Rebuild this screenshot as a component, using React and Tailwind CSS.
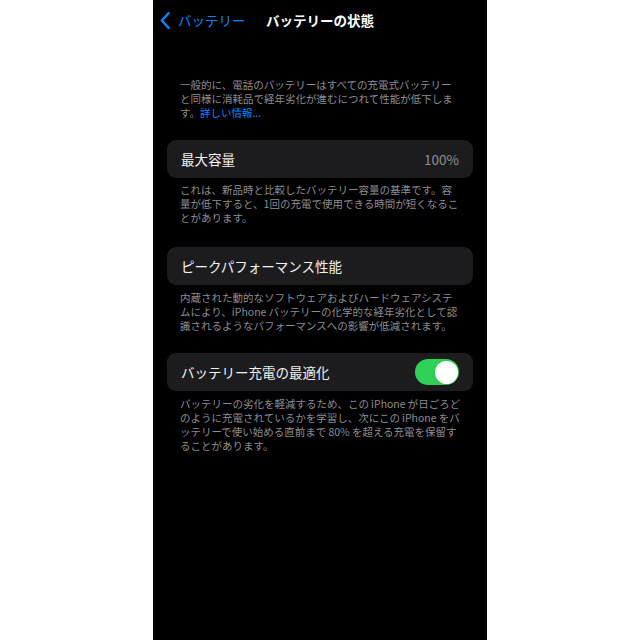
const font = { fontFamily: '"Noto Sans CJK JP", "Noto Sans", sans-serif' };

const Note = ({ lines, className = '' }) => (
    <div className={`px-[13px] text-[10.5px] leading-[14px] text-[#8d8d92] ${className}`}>
        {lines.map((line, i) => (
            <div key={i} className="whitespace-nowrap">{line}</div>
        ))}
    </div>
);

const Row = ({ children, className = '' }) => (
    <div className={`h-[38px] rounded-[9px] bg-[#1c1c1e] px-[14px] flex items-center justify-between ${className}`}>
        {children}
    </div>
);

const App = () => {
    return (
        <div className="w-[640px] h-[640px] bg-white flex justify-center" style={font}>
            <div className="w-[334px] h-[640px] bg-black">
                <div className="h-[40px] grid grid-cols-[1fr_auto_1fr] items-center">
                    <div className="flex items-center pl-[7px] gap-[8px]">
                        <svg width="10" height="17" viewBox="0 0 10 17" fill="none">
                            <path d="M8.5 1.2 L1.8 8.5 L8.5 15.8" stroke="#0a84ff" strokeWidth="2.4" strokeLinecap="round" strokeLinejoin="round" />
                        </svg>
                        <span className="text-[13.5px] text-[#0a84ff]">バッテリー</span>
                    </div>
                    <div className="text-[13.5px] font-bold text-white">バッテリーの状態</div>
                    <div />
                </div>
                <div className="px-[14px]">
                    <Note
                        className="mt-[38px]"
                        lines={[
                            '一般的に、電話のバッテリーはすべての充電式バッテリー',
                            'と同様に消耗品で経年劣化が進むにつれて性能が低下しま',
                            <>す。<span className="text-[#0a84ff]">詳しい情報...</span></>,
                        ]}
                    />
                    <Row className="mt-[20px]">
                        <span className="text-[13.5px] font-normal text-[#f2f2f2]">最大容量</span>
                        <span className="text-[13.5px] text-[#8d8d92]">100%</span>
                    </Row>
                    <Note
                        className="mt-[5px]"
                        lines={[
                            'これは、新品時と比較したバッテリー容量の基準です。容',
                            '量が低下すると、1回の充電で使用できる時間が短くなるこ',
                            'とがあります。',
                        ]}
                    />
                    <Row className="mt-[22px]">
                        <span className="text-[13.5px] font-normal text-[#f2f2f2]">ピークパフォーマンス性能</span>
                    </Row>
                    <Note
                        className="mt-[6px]"
                        lines={[
                            '内蔵された動的なソフトウェアおよびハードウェアシステ',
                            'ムにより、iPhone\u2009バッテリーの化学的な経年劣化として認',
                            '識されるようなパフォーマンスへの影響が低減されます。',
                        ]}
                    />
                    <Row className="mt-[20px]">
                        <span className="text-[13.5px] font-normal text-[#f2f2f2]">バッテリー充電の最適化</span>
                        <div className="w-[44px] h-[26px] rounded-full bg-[#30d158] flex items-center justify-end pr-[1.5px]">
                            <div className="w-[23px] h-[23px] rounded-full bg-white shadow" />
                        </div>
                    </Row>
                    <Note
                        className="mt-[6px]"
                        lines={[
                            'バッテリーの劣化を軽減するため、この\u2009iPhone\u2009が日ごろど',
                            'のように充電されているかを学習し、次にこの\u2009iPhone\u2009をバ',
                            'ッテリーで使い始める直前まで\u200980%\u2009を超える充電を保留す',
                            'ることがあります。',
                        ]}
                    />
                </div>
            </div>
        </div>
    );
};

export default App;
